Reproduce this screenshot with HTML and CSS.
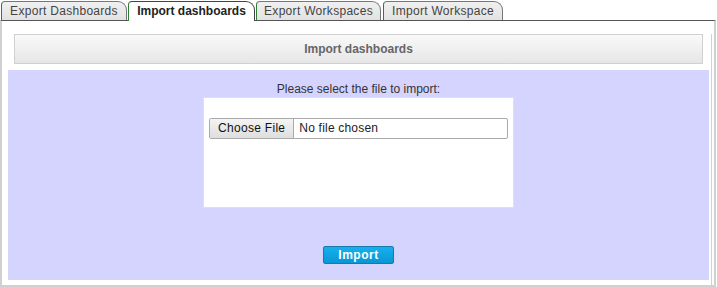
FILE: index.html
```html
<!doctype html>
<html>

<head>
    <title>Import dashboards</title>
    <meta charset="utf-8">
    <link rel="stylesheet" href="styles.css">
</head>

<body>
    <div class="tabs">
        <div class="tab">Export Dashboards</div>
        <div class="tab active">Import dashboards</div>
        <div class="tab">Export Workspaces</div>
        <div class="tab">Import Workspace</div>
    </div>
    <div class="panel">
        <div class="inner">
            <div class="title">Import dashboards</div>
            <div class="form">
                <p class="label">Please select the file to import:</p>
                <div class="filebox">
                    <div class="fileinput">
                        <span class="choose">Choose File</span>
                        <span class="nofile">No file chosen</span>
                    </div>
                </div>
                <button class="btnImport" type="button">Import</button>
            </div>
        </div>
    </div>
</body>

</html>
```

FILE: styles.css
```css
body {
    margin: 0;
    font-family: "Liberation Sans", Arial, Helvetica, sans-serif;
    font-size: 12px;
    color: #333;
    background: #fff;
}

.tabs {
    display: flex;
    gap: 1px;
    padding: 1px 0 0 1px;
    height: 19px;
}

.tab {
    width: 126px;
    height: 19px;
    box-sizing: border-box;
    padding-top: 2px;
    text-align: center;
    color: #444;
    background: linear-gradient(#f0f0f0, #e2e2e2);
    border: 1px solid #777;
    border-left-color: #2e7d32;
    border-bottom: none;
    border-radius: 4px 9px 0 0;
    letter-spacing: 0.3px;
}

.tab:nth-child(3) {
    width: 125px;
}

.tab:nth-child(4) {
    width: 120px;
    margin-left: 1px;
}

.tab.active {
    width: 127px;
    background: #fff;
    color: #222;
    font-weight: bold;
    height: 20px;
    margin-bottom: -1px;
    position: relative;
    border-color: #444;
    border-left-color: #2e7d32;
    letter-spacing: 0;
}

.panel {
    border-top: 1px solid #555;
    border-left: 2px solid #d0d0d0;
    border-right: 2px solid #d0d0d0;
    border-bottom: 2px solid #d0d0d0;
    margin-right: 1px;
    height: 264px;
    padding-right: 2px;
}

.inner {
    border-right: 1px solid #d0d0d0;
    height: 100%;
    box-sizing: border-box;
    padding: 0 2px 0 6px;
}

.title {
    margin: 13px 6px 0 6px;
    height: 28px;
    line-height: 28px;
    border: 1px solid #d0d0d0;
    background: linear-gradient(#f9f9f9, #e6e6e6);
    text-align: center;
    font-weight: bold;
    color: #666;
}

.form {
    margin-top: 6px;
    background: #d4d4fe;
    height: 210px;
    display: flex;
    flex-direction: column;
    align-items: center;
}

.label {
    margin: 12px 0 1px;
    line-height: 14px;
}

.filebox {
    width: 311px;
    height: 111px;
    box-sizing: border-box;
    background: #fff;
    border: 1px solid #e0e0e0;
    padding: 20px 5px 0;
}

.fileinput {
    display: flex;
    height: 21px;
    box-sizing: border-box;
    border: 1px solid #aaa;
    border-radius: 2px;
    background: #fff;
    align-items: stretch;
}

.choose {
    padding: 0 8px;
    line-height: 19px;
    background: linear-gradient(#f4f4f4, #dedede);
    border-right: 1px solid #aaa;
    color: #111;
    letter-spacing: 0.3px;
}

.nofile {
    padding-left: 5px;
    line-height: 19px;
    color: #222;
    letter-spacing: 0.2px;
}

.btnImport {
    margin-top: 38px;
    width: 71px;
    height: 18px;
    padding: 0;
    font-family: inherit;
    font-size: 12px;
    font-weight: bold;
    color: #fff;
    letter-spacing: 0.5px;
    background: linear-gradient(#16b0ee, #0a96d6);
    border: 1px solid #1c78a8;
    border-radius: 2px;
}
```
